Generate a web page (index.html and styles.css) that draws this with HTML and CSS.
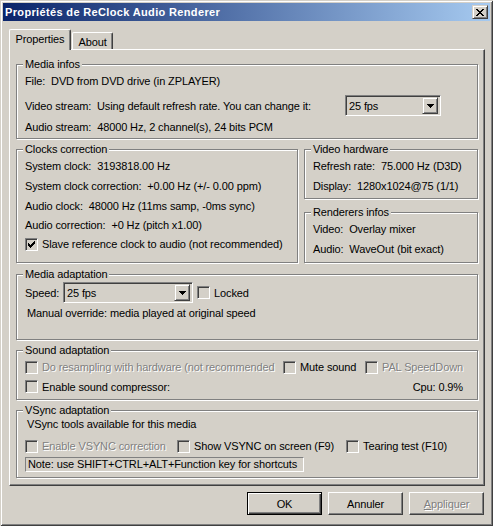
FILE: index.html
```html
<!DOCTYPE html>
<html>
<head>
<meta charset="utf-8">
<title>Propriétés de ReClock Audio Renderer</title>
<link rel="stylesheet" href="styles.css">
</head>
<body>
<div class="window">
  <div class="titlebar">
    <span class="title">Propriétés de ReClock Audio Renderer</span>
    <span class="close">
      <svg width="8" height="7" viewBox="0 0 8 7" shape-rendering="crispEdges"><g fill="#000"><rect x="0" y="0" width="2" height="1"/><rect x="6" y="0" width="2" height="1"/><rect x="1" y="1" width="2" height="1"/><rect x="5" y="1" width="2" height="1"/><rect x="2" y="2" width="4" height="1"/><rect x="3" y="3" width="2" height="1"/><rect x="2" y="4" width="4" height="1"/><rect x="1" y="5" width="2" height="1"/><rect x="5" y="5" width="2" height="1"/><rect x="0" y="6" width="2" height="1"/><rect x="6" y="6" width="2" height="1"/></g></svg>
    </span>
  </div>
  <div class="client">
    <div class="tabs">
      <div class="tab tab-active">Properties</div>
      <div class="tab tab-about">About</div>
    </div>
    <div class="page">
      <div class="group g-media">
        <span class="legend">Media infos</span>
        <div class="row">File:&nbsp; DVD from DVD drive (in ZPLAYER)</div>
        <div class="row row-combo m4">
          <span class="lbl-video">Video stream:&nbsp; Using default refresh rate. You can change it:</span>
          <div class="combo c-video"><span class="combo-text">25 fps</span><span class="combo-btn"><svg width="7" height="4" viewBox="0 0 7 4" shape-rendering="crispEdges"><g fill="#000"><rect x="0" y="0" width="7" height="1"/><rect x="1" y="1" width="5" height="1"/><rect x="2" y="2" width="3" height="1"/><rect x="3" y="3" width="1" height="1"/></g></svg></span></div>
        </div>
        <div class="row m1">Audio stream:&nbsp; 48000 Hz, 2 channel(s), 24 bits PCM</div>
      </div>

      <div class="clock-row">
        <div class="group g-clocks">
          <span class="legend">Clocks correction</span>
          <div class="row">System clock:&nbsp; 3193818.00 Hz</div>
          <div class="row">System clock correction:&nbsp; +0.00 Hz (+/- 0.00 ppm)</div>
          <div class="row h19">Audio clock:&nbsp; 48000 Hz (11ms samp, -0ms sync)</div>
          <div class="row h19">Audio correction:&nbsp; +0 Hz (pitch x1.00)</div>
          <div class="row">
            <span class="check"><span class="cb cb-on"><svg width="7" height="7" viewBox="0 0 7 7" shape-rendering="crispEdges"><g fill="#000"><rect x="6" y="0" width="1" height="1"/><rect x="5" y="1" width="2" height="1"/><rect x="0" y="2" width="1" height="1"/><rect x="4" y="2" width="3" height="1"/><rect x="0" y="3" width="2" height="1"/><rect x="3" y="3" width="3" height="1"/><rect x="0" y="4" width="5" height="1"/><rect x="1" y="5" width="3" height="1"/><rect x="2" y="6" width="1" height="1"/></g></svg></span>Slave reference clock to audio (not recommended)</span>
          </div>
        </div>
        <div class="side">
          <div class="group g-video">
            <span class="legend">Video hardware</span>
            <div class="row">Refresh rate:&nbsp; 75.000 Hz (D3D)</div>
            <div class="row">Display:&nbsp; 1280x1024@75 (1/1)</div>
          </div>
          <div class="group g-rend">
            <span class="legend">Renderers infos</span>
            <div class="row">Video:&nbsp; Overlay mixer</div>
            <div class="row h19">Audio:&nbsp; WaveOut (bit exact)</div>
          </div>
        </div>
      </div>

      <div class="group g-adapt">
        <span class="legend">Media adaptation</span>
        <div class="row row-combo">
          <span class="lbl-speed">Speed:</span>
          <div class="combo c-speed"><span class="combo-text">25 fps</span><span class="combo-btn"><svg width="7" height="4" viewBox="0 0 7 4" shape-rendering="crispEdges"><g fill="#000"><rect x="0" y="0" width="7" height="1"/><rect x="1" y="1" width="5" height="1"/><rect x="2" y="2" width="3" height="1"/><rect x="3" y="3" width="1" height="1"/></g></svg></span></div>
          <span class="check locked"><span class="cb"></span>Locked</span>
        </div>
        <div class="row indent">Manual override: media played at original speed</div>
      </div>

      <div class="group g-sound">
        <span class="legend">Sound adaptation</span>
        <div class="row">
          <span class="check w-resamp disabled"><span class="cb cb-dis"></span>Do resampling with hardware (not recommended</span>
          <span class="check w-mute"><span class="cb"></span>Mute sound</span>
          <span class="check disabled"><span class="cb cb-dis"></span>PAL SpeedDown</span>
        </div>
        <div class="row h19">
          <span class="check"><span class="cb"></span>Enable sound compressor:</span>
          <span class="cpu">Cpu: 0.9%</span>
        </div>
      </div>

      <div class="group g-vsync">
        <span class="legend">VSync adaptation</span>
        <div class="row h18 indent">VSync tools available for this media</div>
        <div class="row m3">
          <span class="check w-vs1 disabled"><span class="cb cb-dis"></span>Enable VSYNC correction</span>
          <span class="check w-vs2"><span class="cb"></span>Show VSYNC on screen (F9)</span>
          <span class="check"><span class="cb"></span>Tearing test (F10)</span>
        </div>
        <div class="note">Note: use SHIFT+CTRL+ALT+Function key for shortcuts</div>
      </div>
    </div>

    <div class="buttons">
      <div class="btn btn-default">OK</div>
      <div class="btn">Annuler</div>
      <div class="btn disabled"><span><u>A</u>ppliquer</span></div>
    </div>
  </div>
</div>
</body>
</html>
```

FILE: styles.css
```css
* {
  box-sizing: border-box;
}

html, body {
  margin: 0;
  padding: 0;
}

body {
  width: 493px;
  height: 526px;
  overflow: hidden;
  background: #d4d0c8;
  font-family: "Liberation Sans", Arial, sans-serif;
  font-size: 11px;
  letter-spacing: -0.12px;
  color: #000;
}

.window {
  width: 493px;
  height: 526px;
  padding: 3px;
  display: flex;
  flex-direction: column;
  box-shadow: inset 1px 1px #d4d0c8, inset -1px -1px #404040, inset 2px 2px #fff, inset -2px -2px #808080;
}

.titlebar {
  height: 18px;
  flex: none;
  display: flex;
  align-items: center;
  justify-content: space-between;
  padding: 0 2px 0 2px;
  background: linear-gradient(to right, #0a246a, #a6caf0);
}

.title {
  color: #fff;
  font-weight: bold;
  font-size: 11px;
  letter-spacing: 0.35px;
  line-height: 18px;
}

.close {
  width: 16px;
  height: 14px;
  display: flex;
  align-items: center;
  justify-content: center;
  background: #d4d0c8;
  border: 1px solid;
  border-color: #d4d0c8 #404040 #404040 #d4d0c8;
  box-shadow: inset 1px 1px #fff, inset -1px -1px #808080;
}

.close svg {
  display: block;
}

.client {
  flex: 1;
  display: flex;
  flex-direction: column;
  padding: 8px 5px 0 6px;
}

.tabs {
  height: 20px;
  display: flex;
  align-items: flex-end;
}

.tab {
  height: 17px;
  display: flex;
  align-items: center;
  justify-content: center;
  background: #d4d0c8;
  border-top: 1px solid #fff;
  border-left: 1px solid #fff;
  border-right: 1px solid #404040;
  border-radius: 2px 2px 0 0;
  box-shadow: inset -1px 0 #808080;
}

.tab-active {
  height: 21px;
  width: 62px;
  margin-bottom: -1px;
  position: relative;
  z-index: 1;
  padding-bottom: 2px;
}

.tab-about {
  width: 41px;
  margin-left: 1px;
  padding-top: 1px;
}

.page {
  height: 437px;
  flex: none;
  border: 1px solid;
  border-color: #fff #404040 #404040 #fff;
  box-shadow: inset -1px -1px #808080;
  padding: 14px 6px 0 6px;
  display: flex;
  flex-direction: column;
}

.group {
  position: relative;
  flex: none;
  border: 1px solid #808080;
  box-shadow: inset 1px 1px #fff, 1px 1px #fff;
  padding: 0 8px;
}

.legend {
  position: absolute;
  top: -8px;
  left: 6px;
  padding: 0 2px;
  line-height: 14px;
  background: #d4d0c8;
}

.row {
  height: 20px;
  display: flex;
  align-items: center;
  white-space: nowrap;
}

.h19 { height: 19px; }
.h18 { height: 18px; }
.m1 { margin-top: 1px; }
.m3 { margin-top: 3px; }
.m4 { margin-top: 4px; }
.indent { padding-left: 2px; }

.row-combo {
  height: 21px;
}

.g-media {
  height: 75px;
  padding-top: 6px;
}

.lbl-video {
  width: 320px;
}

.combo {
  height: 21px;
  display: flex;
  align-items: center;
  justify-content: space-between;
  padding: 2px;
  background: #d4d0c8;
  border: 1px solid;
  border-color: #808080 #fff #fff #808080;
  box-shadow: inset 1px 1px #404040, inset -1px -1px #d4d0c8;
}

.combo-text {
  padding-left: 1px;
}

.combo-btn {
  width: 16px;
  height: 17px;
  display: flex;
  align-items: center;
  justify-content: center;
  border: 1px solid;
  border-color: #d4d0c8 #404040 #404040 #d4d0c8;
  box-shadow: inset 1px 1px #fff, inset -1px -1px #808080;
}

.combo-btn svg {
  display: block;
}

.c-video { width: 96px; }
.c-speed { width: 130px; }

.clock-row {
  display: flex;
  gap: 6px;
  margin-top: 10px;
}

.g-clocks {
  width: 282px;
  height: 114px;
  padding-top: 6px;
}

.side {
  width: 174px;
  display: flex;
  flex-direction: column;
}

.g-video {
  height: 50px;
  padding-top: 6px;
}

.g-rend {
  height: 51px;
  margin-top: 13px;
  padding-top: 6px;
}

.g-adapt {
  height: 66px;
  margin-top: 11px;
  padding-top: 7px;
}

.lbl-speed {
  width: 38px;
}

.locked {
  margin-left: 4px;
}

.g-sound {
  height: 50px;
  margin-top: 10px;
  padding-top: 6px;
}

.w-resamp { width: 258px; }
.w-mute { width: 82px; }

.cpu {
  margin-left: auto;
  margin-right: 6px;
}

.g-vsync {
  height: 68px;
  margin-top: 10px;
  padding-top: 4px;
}

.w-vs1 { width: 152px; }
.w-vs2 { width: 169px; }

.note {
  width: 279px;
  height: 15px;
  margin-top: 1px;
  padding-left: 2px;
  line-height: 13px;
  white-space: nowrap;
  border: 1px solid;
  border-color: #808080 #fff #fff #808080;
}

.check {
  display: flex;
  align-items: center;
  gap: 4px;
  white-space: nowrap;
}

.cb {
  width: 13px;
  height: 13px;
  flex: none;
  display: flex;
  align-items: center;
  justify-content: center;
  background: #d4d0c8;
  border: 1px solid;
  border-color: #808080 #fff #fff #808080;
  box-shadow: inset 1px 1px #404040, inset -1px -1px #d4d0c8;
}

.cb svg {
  display: block;
}

.disabled {
  color: #808080;
  text-shadow: 1px 1px 0 #fff;
}

.buttons {
  display: flex;
  justify-content: flex-end;
  gap: 6px;
  margin-top: 6px;
  padding-right: 1px;
}

.btn {
  width: 75px;
  height: 23px;
  display: flex;
  align-items: center;
  justify-content: center;
  background: #d4d0c8;
  border: 1px solid;
  border-color: #fff #404040 #404040 #fff;
  box-shadow: inset -1px -1px #808080;
}

.btn-default {
  border-color: #000;
  box-shadow: inset 1px 1px #fff, inset -1px -1px #404040, inset -2px -2px #808080;
}
```
